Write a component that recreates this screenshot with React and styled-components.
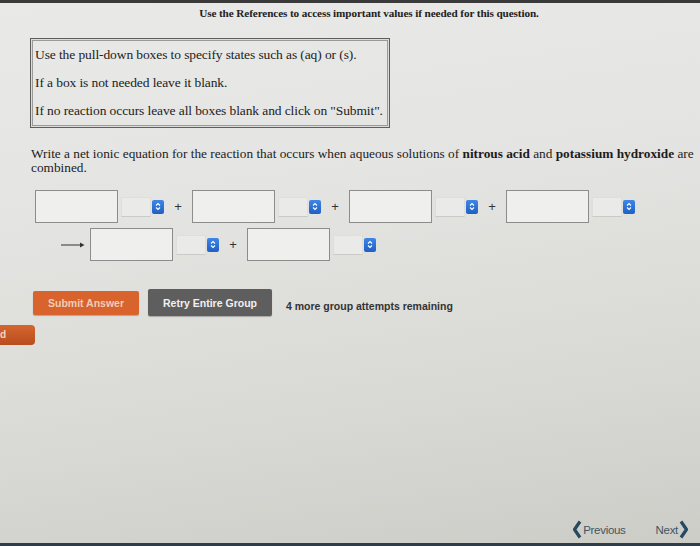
import React from 'react';
import styled, { createGlobalStyle } from 'styled-components';

const GlobalStyle = createGlobalStyle`
  html, body {
    margin: 0;
    padding: 0;
  }
  body {
    width: 700px;
    height: 546px;
    overflow: hidden;
    background: #d9d9d6;
  }
`;

const Page = styled.div`
  width: 700px;
  height: 546px;
  box-sizing: border-box;
  display: flex;
  flex-direction: column;
  border-top: 3px solid #3a3a3a;
  border-bottom: 3px solid #2f3d4a;
  background: linear-gradient(172deg, #e9e9e7 0%, #e4e4e2 35%, #d9d9d5 70%, #cdcdc8 100%);
  font-family: "Liberation Serif", "Times New Roman", serif;
  color: #1e1e1e;
`;

const Notice = styled.div`
  text-align: center;
  font-weight: bold;
  font-size: 11.2px;
  letter-spacing: -0.1px;
  padding: 4px 0 0 38px;
  height: 20px;
  box-sizing: border-box;
  color: #222;
`;

const InfoBox = styled.div`
  margin: 15px 0 0 30px;
  width: 360px;
  height: 90px;
  box-sizing: border-box;
  border: 1px solid #5e5e5e;
  box-shadow: inset 0 0 0 1px #dcdcda, inset 0 0 0 2px #9a9a98;
  display: flex;
  flex-direction: column;
  justify-content: space-around;
  padding: 2px 0 2px 4px;
  font-size: 13.5px;
  letter-spacing: -0.1px;
  color: #222;
`;

const Question = styled.p`
  margin: 19px 0 0 31px;
  width: 669px;
  font-size: 13.3px;
  line-height: 14px;
  color: #1c1c1c;
`;

const Equation = styled.div`
  margin: 15px 0 0 35px;
  display: flex;
  flex-direction: column;
  gap: 5px;
`;

const EqRow = styled.div`
  display: flex;
  align-items: center;
`;

const Field = styled.div`
  width: 83px;
  height: 33px;
  box-sizing: border-box;
  border: 1px solid #8c8c8a;
  background: #efefed;
`;

const StateSelect = styled.div`
  display: flex;
  align-items: center;
  margin-left: 3px;
  gap: 1px;
`;

const SelectBlank = styled.div`
  width: 30px;
  height: 20px;
  box-sizing: border-box;
  border: 1px solid #dededb;
  border-bottom-color: #cacac6;
  background: #eaeae8;
`;

const Spinner = styled.div`
  width: 12px;
  height: 14px;
  border-radius: 2px;
  background: linear-gradient(#3f86e6, #1f5fc4);
  display: flex;
  align-items: center;
  justify-content: center;
`;

const Plus = styled.span`
  width: 28px;
  text-align: center;
  font-family: "Liberation Sans", Arial, sans-serif;
  font-size: 13px;
  color: #333;
`;

const Arrow = styled.div`
  width: 55px;
  display: flex;
  justify-content: flex-end;
  padding-right: 5px;
  box-sizing: border-box;
`;

const Actions = styled.div`
  margin: 28px 0 0 33px;
  display: flex;
  align-items: center;
  gap: 9px;
  font-family: "Liberation Sans", Arial, sans-serif;
`;

const Button = styled.div`
  height: ${(p) => p.$h}px;
  width: ${(p) => p.$w}px;
  border-radius: 2px;
  display: flex;
  align-items: center;
  justify-content: center;
  font-weight: bold;
  font-size: 10.5px;
  color: ${(p) => (p.$tone === 'orange' ? '#f0cdb8' : '#f1f1f1')};
  background: ${(p) => (p.$tone === 'orange' ? '#d8632c' : '#5e5e5e')};
  box-shadow: 0 1px 1px rgba(0, 0, 0, 0.25);
`;

const Remaining = styled.span`
  margin: 6px 0 0 5px;
  font-size: 10.5px;
  font-weight: bold;
  color: #333;
`;

const StrayTab = styled.div`
  margin-top: 9px;
  width: 35px;
  height: 20px;
  border-radius: 0 4px 4px 0;
  background: linear-gradient(#d6652f, #b84d1e);
  color: #f4d6c4;
  font-family: "Liberation Sans", Arial, sans-serif;
  font-size: 10px;
  font-weight: bold;
  line-height: 20px;
`;

const Footer = styled.div`
  margin-top: auto;
  display: flex;
  justify-content: flex-end;
  align-items: center;
  gap: 30px;
  padding: 0 11px 4px 0;
  font-family: "Liberation Sans", Arial, sans-serif;
  font-size: 11.5px;
  color: #3f5563;
`;

const NavLink = styled.span`
  display: flex;
  align-items: center;
  gap: 1px;
  letter-spacing: -0.3px;
`;

const Chevron = ({ dir }) => (
  <svg width="10" height="19" viewBox="0 0 10 19">
    <path
      d={dir === 'left' ? 'M8 1.5 L2.5 9.5 L8 17.5' : 'M2 1.5 L7.5 9.5 L2 17.5'}
      fill="none"
      stroke="#284a60"
      strokeWidth="3.2"
      strokeLinejoin="round"
    />
  </svg>
);

const SpinGlyph = () => (
  <svg width="6" height="9" viewBox="0 0 6 9">
    <path d="M1 3.5 L3 1.5 L5 3.5 M1 5.5 L3 7.5 L5 5.5" fill="none" stroke="#fff" strokeWidth="1.1" />
  </svg>
);

const Term = ({ last }) => (
  <>
    <Field />
    <StateSelect>
      <SelectBlank />
      <Spinner>
        <SpinGlyph />
      </Spinner>
    </StateSelect>
    {!last && <Plus>+</Plus>}
  </>
);

const App = () => (
  <Page>
    <GlobalStyle />
    <Notice>Use the References to access important values if needed for this question.</Notice>
    <InfoBox>
      <div>Use the pull-down boxes to specify states such as (aq) or (s).</div>
      <div>If a box is not needed leave it blank.</div>
      <div>If no reaction occurs leave all boxes blank and click on "Submit".</div>
    </InfoBox>
    <Question>
      Write a net ionic equation for the reaction that occurs when aqueous solutions of{' '}
      <b>nitrous acid</b> and <b>potassium hydroxide</b> are combined.
    </Question>
    <Equation>
      <EqRow>
        <Term />
        <Term />
        <Term />
        <Term last />
      </EqRow>
      <EqRow>
        <Arrow>
          <svg width="24" height="6" viewBox="0 0 24 6">
            <path d="M0 3 H21" stroke="#333" strokeWidth="1" />
            <path d="M19 0.5 L23.5 3 L19 5.5 Z" fill="#333" />
          </svg>
        </Arrow>
        <Term />
        <Term last />
      </EqRow>
    </Equation>
    <Actions>
      <Button $tone="orange" $w={106} $h={24}>Submit Answer</Button>
      <Button $tone="grey" $w={124} $h={27}>Retry Entire Group</Button>
      <Remaining>4 more group attempts remaining</Remaining>
    </Actions>
    <StrayTab>d</StrayTab>
    <Footer>
      <NavLink>
        <Chevron dir="left" />
        Previous
      </NavLink>
      <NavLink>
        Next
        <Chevron dir="right" />
      </NavLink>
    </Footer>
  </Page>
);

export default App;
